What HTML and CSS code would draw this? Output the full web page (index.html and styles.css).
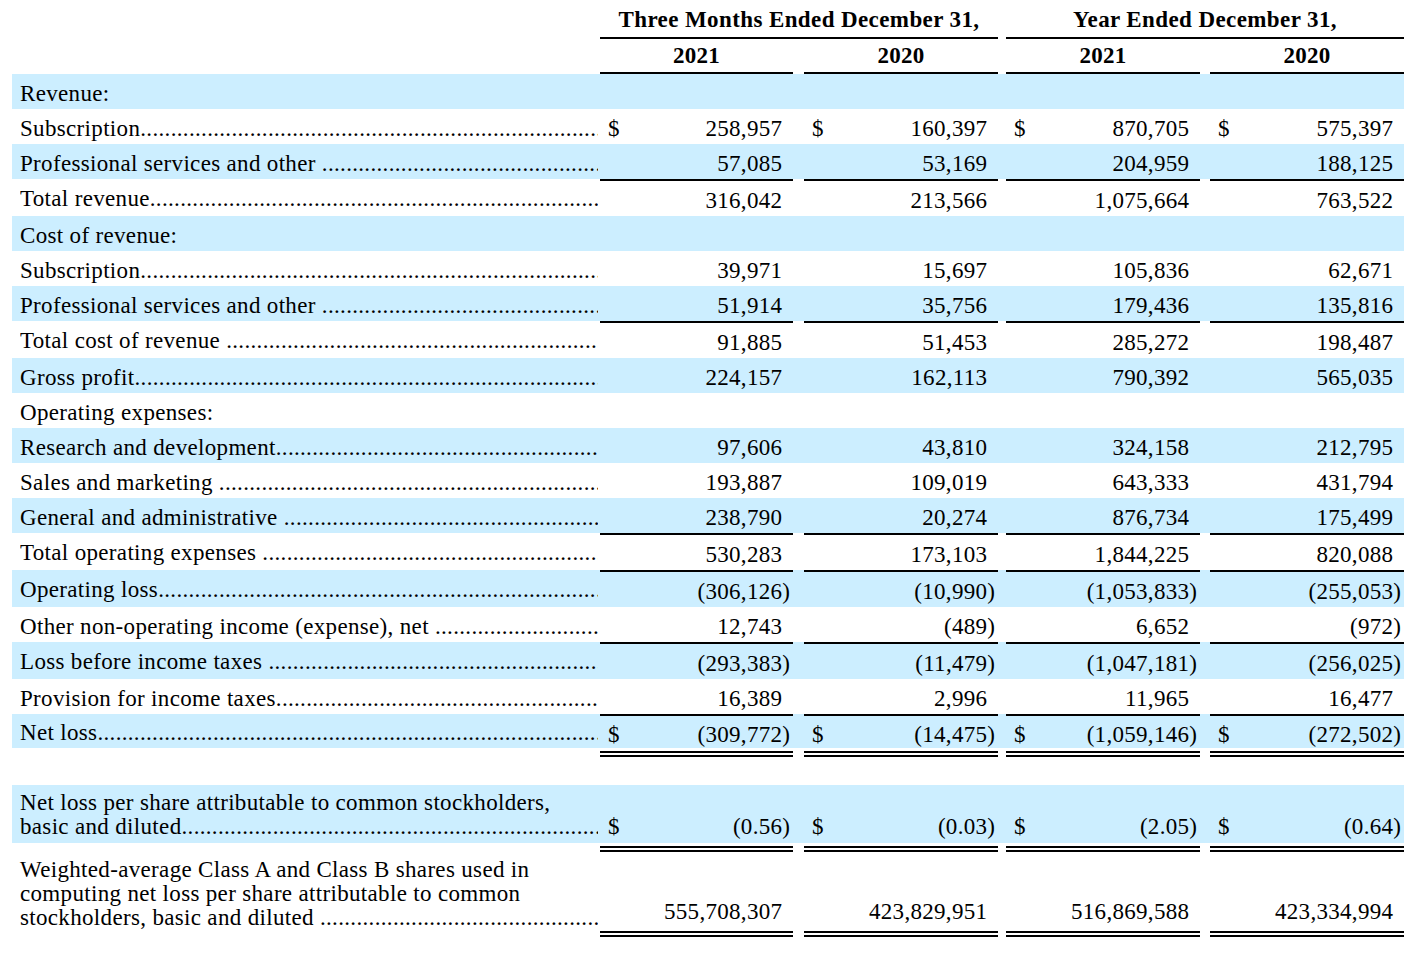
FILE: index.html
```html
<!DOCTYPE html>
<html lang="en">
<head>
<meta charset="utf-8">
<title>Statement of Operations</title>
<link rel="stylesheet" href="styles.css">
</head>
<body>
<div class="table">
  <div class="row head1">
    <div class="lbl"></div>
    <div class="span2 a">Three Months Ended December 31,</div>
    <div class="span2 b">Year Ended December 31,</div>
  </div>
  <div class="row head2">
    <div class="lbl"></div>
    <div class="n n1">2021</div>
    <div class="n n2">2020</div>
    <div class="n n3">2021</div>
    <div class="n n4">2020</div>
  </div>

  <div class="row blue">
    <div class="lbl">Revenue:</div>
  </div>
  <div class="row">
    <div class="lbl"><span class="lead">Subscription</span></div>
    <div class="n n1"><span class="d">$</span><span class="v">258,957</span></div>
    <div class="n n2"><span class="d">$</span><span class="v">160,397</span></div>
    <div class="n n3"><span class="d">$</span><span class="v">870,705</span></div>
    <div class="n n4"><span class="d">$</span><span class="v">575,397</span></div>
  </div>
  <div class="row blue">
    <div class="lbl"><span class="lead">Professional services and other </span></div>
    <div class="n n1"><span class="v">57,085</span></div>
    <div class="n n2"><span class="v">53,169</span></div>
    <div class="n n3"><span class="v">204,959</span></div>
    <div class="n n4"><span class="v">188,125</span></div>
  </div>
  <div class="row ruled">
    <div class="lbl"><span class="lead">Total revenue</span></div>
    <div class="n n1"><span class="v">316,042</span></div>
    <div class="n n2"><span class="v">213,566</span></div>
    <div class="n n3"><span class="v">1,075,664</span></div>
    <div class="n n4"><span class="v">763,522</span></div>
  </div>
  <div class="row blue">
    <div class="lbl">Cost of revenue:</div>
  </div>
  <div class="row">
    <div class="lbl"><span class="lead">Subscription</span></div>
    <div class="n n1"><span class="v">39,971</span></div>
    <div class="n n2"><span class="v">15,697</span></div>
    <div class="n n3"><span class="v">105,836</span></div>
    <div class="n n4"><span class="v">62,671</span></div>
  </div>
  <div class="row blue">
    <div class="lbl"><span class="lead">Professional services and other </span></div>
    <div class="n n1"><span class="v">51,914</span></div>
    <div class="n n2"><span class="v">35,756</span></div>
    <div class="n n3"><span class="v">179,436</span></div>
    <div class="n n4"><span class="v">135,816</span></div>
  </div>
  <div class="row ruled">
    <div class="lbl"><span class="lead">Total cost of revenue </span></div>
    <div class="n n1"><span class="v">91,885</span></div>
    <div class="n n2"><span class="v">51,453</span></div>
    <div class="n n3"><span class="v">285,272</span></div>
    <div class="n n4"><span class="v">198,487</span></div>
  </div>
  <div class="row blue">
    <div class="lbl"><span class="lead">Gross profit</span></div>
    <div class="n n1"><span class="v">224,157</span></div>
    <div class="n n2"><span class="v">162,113</span></div>
    <div class="n n3"><span class="v">790,392</span></div>
    <div class="n n4"><span class="v">565,035</span></div>
  </div>
  <div class="row">
    <div class="lbl">Operating expenses:</div>
  </div>
  <div class="row blue">
    <div class="lbl"><span class="lead">Research and development</span></div>
    <div class="n n1"><span class="v">97,606</span></div>
    <div class="n n2"><span class="v">43,810</span></div>
    <div class="n n3"><span class="v">324,158</span></div>
    <div class="n n4"><span class="v">212,795</span></div>
  </div>
  <div class="row">
    <div class="lbl"><span class="lead">Sales and marketing </span></div>
    <div class="n n1"><span class="v">193,887</span></div>
    <div class="n n2"><span class="v">109,019</span></div>
    <div class="n n3"><span class="v">643,333</span></div>
    <div class="n n4"><span class="v">431,794</span></div>
  </div>
  <div class="row blue">
    <div class="lbl"><span class="lead">General and administrative </span></div>
    <div class="n n1"><span class="v">238,790</span></div>
    <div class="n n2"><span class="v">20,274</span></div>
    <div class="n n3"><span class="v">876,734</span></div>
    <div class="n n4"><span class="v">175,499</span></div>
  </div>
  <div class="row ruled">
    <div class="lbl"><span class="lead">Total operating expenses </span></div>
    <div class="n n1"><span class="v">530,283</span></div>
    <div class="n n2"><span class="v">173,103</span></div>
    <div class="n n3"><span class="v">1,844,225</span></div>
    <div class="n n4"><span class="v">820,088</span></div>
  </div>
  <div class="row blue ruled">
    <div class="lbl"><span class="lead">Operating loss</span></div>
    <div class="n n1"><span class="v">(306,126<span class="p">)</span></span></div>
    <div class="n n2"><span class="v">(10,990<span class="p">)</span></span></div>
    <div class="n n3"><span class="v">(1,053,833<span class="p">)</span></span></div>
    <div class="n n4"><span class="v">(255,053<span class="p">)</span></span></div>
  </div>
  <div class="row">
    <div class="lbl"><span class="lead">Other non-operating income (expense), net </span></div>
    <div class="n n1"><span class="v">12,743</span></div>
    <div class="n n2"><span class="v">(489<span class="p">)</span></span></div>
    <div class="n n3"><span class="v">6,652</span></div>
    <div class="n n4"><span class="v">(972<span class="p">)</span></span></div>
  </div>
  <div class="row blue ruled">
    <div class="lbl"><span class="lead">Loss before income taxes </span></div>
    <div class="n n1"><span class="v">(293,383<span class="p">)</span></span></div>
    <div class="n n2"><span class="v">(11,479<span class="p">)</span></span></div>
    <div class="n n3"><span class="v">(1,047,181<span class="p">)</span></span></div>
    <div class="n n4"><span class="v">(256,025<span class="p">)</span></span></div>
  </div>
  <div class="row">
    <div class="lbl"><span class="lead">Provision for income taxes</span></div>
    <div class="n n1"><span class="v">16,389</span></div>
    <div class="n n2"><span class="v">2,996</span></div>
    <div class="n n3"><span class="v">11,965</span></div>
    <div class="n n4"><span class="v">16,477</span></div>
  </div>
  <div class="row blue ruled net">
    <div class="lbl"><span class="lead">Net loss</span></div>
    <div class="n n1"><span class="d">$</span><span class="v">(309,772<span class="p">)</span></span></div>
    <div class="n n2"><span class="d">$</span><span class="v">(14,475<span class="p">)</span></span></div>
    <div class="n n3"><span class="d">$</span><span class="v">(1,059,146<span class="p">)</span></span></div>
    <div class="n n4"><span class="d">$</span><span class="v">(272,502<span class="p">)</span></span></div>
  </div>
  <div class="row double first-double">
    <div class="n n1"></div><div class="n n2"></div><div class="n n3"></div><div class="n n4"></div>
  </div>

  <div class="row blue multi eps">
    <div class="lbl">Net loss per share attributable to common stockholders,<span class="lead">basic and diluted</span></div>
    <div class="n n1"><span class="d">$</span><span class="v">(0.56<span class="p">)</span></span></div>
    <div class="n n2"><span class="d">$</span><span class="v">(0.03<span class="p">)</span></span></div>
    <div class="n n3"><span class="d">$</span><span class="v">(2.05<span class="p">)</span></span></div>
    <div class="n n4"><span class="d">$</span><span class="v">(0.64<span class="p">)</span></span></div>
  </div>
  <div class="row double">
    <div class="n n1"></div><div class="n n2"></div><div class="n n3"></div><div class="n n4"></div>
  </div>
  <div class="row multi shares">
    <div class="lbl">Weighted-average Class A and Class B shares used in computing net loss per share attributable to common <span class="lead">stockholders, basic and diluted </span></div>
    <div class="n n1"><span class="v">555,708,307</span></div>
    <div class="n n2"><span class="v">423,829,951</span></div>
    <div class="n n3"><span class="v">516,869,588</span></div>
    <div class="n n4"><span class="v">423,334,994</span></div>
  </div>
  <div class="row double">
    <div class="n n1"></div><div class="n n2"></div><div class="n n3"></div><div class="n n4"></div>
  </div>
</div>
</body>
</html>
```
FILE: styles.css
```css
html, body {
  margin: 0;
  padding: 0;
  background: #ffffff;
}

body {
  font-family: "Liberation Serif", "Times New Roman", serif;
  font-size: 23px;
  color: #000000;
  letter-spacing: 0.3px;
}

.table {
  margin-left: 12px;
  width: 1392px;
}

.row {
  display: grid;
  grid-template-columns: 588px 193px 11px 194px 8px 194px 10px 194px;
  height: 35px;
  line-height: 31px;
}

.row > div {
  padding-top: 4px;
  box-sizing: border-box;
}

.blue {
  background: #cceeff;
}

.lbl {
  grid-column: 1;
  padding-left: 8px;
  padding-right: 2px;
  white-space: nowrap;
  overflow: hidden;
  letter-spacing: 0.33px;
}

.lead {
  display: block;
  overflow: hidden;
  white-space: nowrap;
}

.lead::after {
  content: "............................................................................................................................................................";
}

.n {
  display: flex;
  align-items: flex-start;
  padding-left: 8px;
  padding-right: 11px;
  white-space: nowrap;
}

.n1 { grid-column: 2; }
.n2 { grid-column: 4; }
.n3 { grid-column: 6; }
.n4 { grid-column: 8; }

.v {
  margin-left: auto;
  margin-right: -0.3px;
}

.p {
  margin-right: -8px;
}

/* header */
.head1 {
  height: 39px;
  font-weight: bold;
  letter-spacing: 0.4px;
}

.head1 > div {
  padding-top: 4px;
}

.span2 {
  text-align: center;
  border-bottom: 2px solid #000;
}

.span2.a { grid-column: 2 / 5; }
.span2.b { grid-column: 6 / 9; }

.head2 {
  height: 35px;
  font-weight: bold;
}

.head2 > div {
  padding-top: 1px;
}

.head2 .n {
  justify-content: center;
  padding-left: 0;
  padding-right: 0;
  border-bottom: 2px solid #000;
}

/* single rules above subtotal rows */
.ruled {
  height: 37px;
}

.ruled .n {
  border-top: 2px solid #000;
}

.ruled.net {
  height: 34px;
}

.ruled.net > div {
  padding-top: 3px;
}

/* double rules */
.double {
  height: 9px;
  background: transparent;
}

.double > div {
  padding-top: 0;
  margin-top: 3px;
  border-top: 6px double #000;
}

.first-double {
  margin-bottom: 28px;
}

/* multi-line rows */
.multi {
  line-height: 24px;
  align-items: end;
}

.multi .lbl {
  white-space: normal;
}

.eps {
  height: 58px;
}

.eps > div {
  padding-top: 6px;
  padding-bottom: 4px;
}

.shares {
  height: 79px;
  margin-top: -3px;
}

.shares .lbl {
  align-self: start;
  overflow: visible;
  padding-top: 9px;
  padding-right: 60px;
}

.shares .lbl .lead {
  margin-right: -58px;
}

.shares .n {
  padding-bottom: 6px;
}

.eps .n, .shares .n {
  align-items: flex-end;
}
```
